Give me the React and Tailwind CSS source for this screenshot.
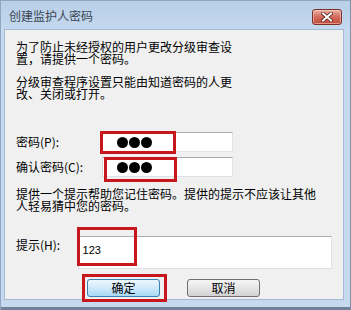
import React from "react";

const cjk = { fontFamily: '"Noto Sans CJK SC", "Noto Sans", sans-serif' };

function Dots() {
  return (
    <div className="flex items-center gap-[1px] pl-[14px]">
      <span className="w-[11px] h-[11px] rounded-full bg-black" />
      <span className="w-[11px] h-[11px] rounded-full bg-black" />
      <span className="w-[11px] h-[11px] rounded-full bg-black" />
    </div>
  );
}

function Input({ className = "", children }) {
  return (
    <div
      className={
        "bg-white border border-[#dfe3e8] border-t-[#a9adb5] border-l-[#d2d6dc] " +
        className
      }
    >
      {children}
    </div>
  );
}

export default function App() {
  return (
    <div
      className="relative w-[351px] h-[310px] overflow-hidden bg-[#c6d9ee] text-black"
      style={cjk}
    >
      {/* title bar */}
      <div className="h-[29px] flex items-start justify-between bg-linear-to-b from-[#b8cfe8] to-[#c4d8ee] border-t border-l border-[#8ea6c2]">
        <div className="pl-[8px] pt-[7px] text-[12px] leading-[16px] text-[#3a4654]">
          创建监护人密码
        </div>
        <div className="mt-[8px] mr-[9px] w-[30px] h-[16px] rounded-[3px] border border-[#7a3025] bg-linear-to-b from-[#eab2a5] via-[#d26a5b] to-[#c24a3a] flex items-center justify-center shadow-[inset_0_0_0_1px_rgba(255,220,210,0.5)]">
          <svg width="12" height="10" viewBox="0 0 12 10">
            <path d="M2 1.5 L10 8.5 M10 1.5 L2 8.5" stroke="#5a1e16" strokeWidth="3.6" strokeLinecap="square" />
            <path d="M2 1.5 L10 8.5 M10 1.5 L2 8.5" stroke="#ffffff" strokeWidth="2" strokeLinecap="square" />
          </svg>
        </div>
      </div>

      {/* client area */}
      <div className="ml-[4px] mr-[7px] h-[271px] bg-[#f0f0f0] border border-[#a4b9d2] px-[11px] text-[12px]">
        <p className="mt-[11px] leading-[12px]">
          为了防止未经授权的用户更改分级审查设
          <br />
          置，请提供一个密码。
        </p>
        <p className="mt-[11px] leading-[12px]">
          分级审查程序设置只能由知道密码的人更
          <br />
          改、关闭或打开。
        </p>

        <div className="mt-[32px] flex items-center">
          <div className="w-[86px] leading-[14px]">密码(P):</div>
          <Input className="w-[131px] h-[20px] flex items-center">
            <Dots />
          </Input>
        </div>
        <div className="mt-[5px] flex items-center">
          <div className="w-[86px] leading-[14px]">确认密码(C):</div>
          <Input className="w-[131px] h-[20px] flex items-center">
            <Dots />
          </Input>
        </div>

        <p className="mt-[11px] leading-[12px]">
          提供一个提示帮助您记住密码。提供的提示不应该让其他
          <br />
          人轻易猜中您的密码。
        </p>

        <div className="mt-[24px] flex items-start">
          <div className="w-[62px] pt-[2px] leading-[14px]">提示(H):</div>
          <Input className="w-[256px] h-[33px] pl-[4px] pt-[3px]">
            <span
              className="text-[11px] leading-[13px]"
              style={{ fontFamily: '"Liberation Sans", Arial, sans-serif' }}
            >
              123
            </span>
          </Input>
        </div>

        <div className="mt-[10px] flex pl-[71px] gap-[27px]">
          <button className="w-[73px] h-[18px] rounded-[3px] border border-[#3c7fb1] bg-linear-to-b from-[#edf7fd] via-[#cfeafb] to-[#a9d9f4] text-[12px] leading-[14px] flex items-center justify-center">
            确定
          </button>
          <button className="w-[73px] h-[18px] rounded-[3px] border border-[#707070] bg-linear-to-b from-[#f4f4f4] via-[#e6e6e6] to-[#d2d2d2] text-[12px] leading-[14px] flex items-center justify-center">
            取消
          </button>
        </div>
      </div>

      {/* frame lines */}
      <div className="absolute left-0 right-0 bottom-0 h-[3px] bg-[#6f8299]" />
      <div className="absolute top-0 bottom-0 left-0 w-px bg-[#8ea6c2]" />
      <div className="absolute top-0 bottom-0 right-0 w-px bg-[#7d93ad]" />

      {/* red highlight boxes */}
      <div className="absolute left-[100px] top-[131px] w-[76px] h-[23px] border-[3px] border-[#c8161d]" />
      <div className="absolute left-[104px] top-[157px] w-[73px] h-[25px] border-[3px] border-[#c8161d]" />
      <div className="absolute left-[77px] top-[227px] w-[60px] h-[39px] border-[3px] border-[#c8161d]" />
      <div className="absolute left-[82px] top-[274px] w-[85px] h-[28px] border-[3px] border-[#c8161d]" />
    </div>
  );
}
